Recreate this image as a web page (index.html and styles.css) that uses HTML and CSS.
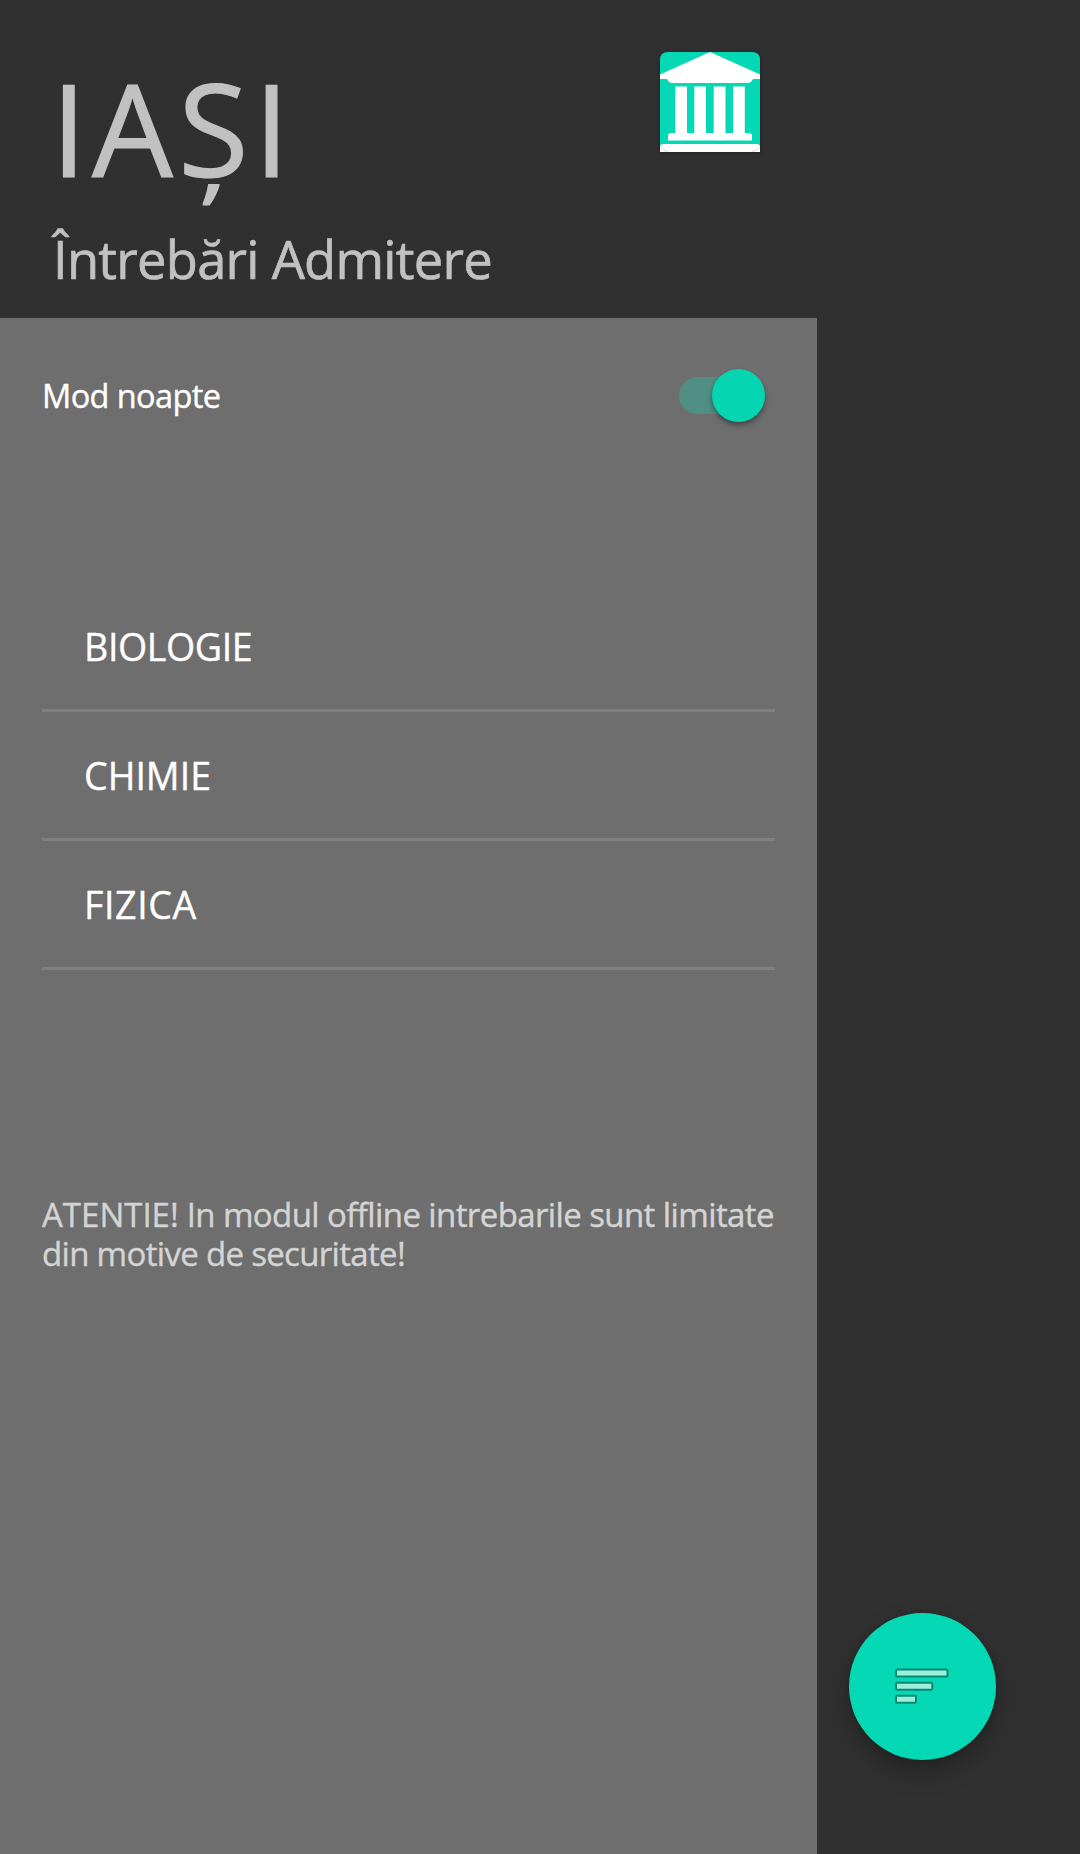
FILE: index.html
```html
<!DOCTYPE html>
<html lang="ro">
<head>
<meta charset="utf-8">
<title>Întrebări Admitere</title>
<link rel="stylesheet" href="styles.css">
</head>
<body>
<div class="app">
  <aside class="drawer">
    <header class="header">
      <div class="heading">
        <h1 class="title">IAȘI</h1>
        <p class="subtitle">Întrebări Admitere</p>
      </div>
      <svg class="logo" viewBox="0 0 100 100">
        <path fill="#05d8b4" d="M8 0H92Q100 0 100 8V100H0V8Q0 0 8 0Z"/>
        <path fill="#fff" d="M50 0L100 22.5V27H93Q91 31 88 31H12Q9 31 7 27H0V22.5Z"/>
        <path fill="#fff" d="M15.3 34.5H27V81H34.300V34.500H46V81H53.700V34.500H65.500V81H73V34.500H84.800V81H89Q92 81 92 84V88.500H8V84Q8 81 11 81H15.300Z"/>
        <path fill="#fff" d="M2 92H98L100 94V100H0V94Z"/>
        <path fill="none" stroke="#ccc" stroke-width=".8" d="M.5 95Q3 99 8 99.600M99.500 95Q97 99 92 99.600"/>
      </svg>
    </header>
    <main class="panel">
      <label class="setting">
        <span class="setting-label">Mod noapte</span>
        <span class="switch"><span class="thumb"></span></span>
      </label>
      <ul class="menu">
        <li class="item biology">BIOLOGIE</li>
        <li class="item chemistry">CHIMIE</li>
        <li class="item physics">FIZICA</li>
      </ul>
      <p class="notice">ATENTIE!<span class="notice-first"> In modul offline intrebarile sunt limitate</span><br><span class="notice-second">din motive de securitate!</span></p>
    </main>
  </aside>
  <div class="backdrop">
    <button class="fab" aria-label="Meniu">
      <svg width="55" height="37" viewBox="0 0 55 37" fill="#9befdf" stroke="#0b8871" stroke-width="2">
        <rect x="1" y="1.500" width="51.500" height="7" rx="1"/>
        <rect x="1" y="14.700" width="36.300" height="7" rx="1"/>
        <rect x="1" y="27.700" width="20" height="7" rx="1"/>
      </svg>
    </button>
  </div>
</div>
</body>
</html>
```
FILE: styles.css
```css
* { box-sizing: border-box; }
body {
  margin: 0;
  background: #303030;
  color: #fff;
  font-family: "Open Sans", "Noto Sans", sans-serif;
  -webkit-text-stroke: .4px currentColor;
}
.app { display: flex; height: 1854px; }
.drawer { width: 817px; display: flex; flex-direction: column; }
.header {
  height: 318px;
  padding: 53px 57px 0 53px;
  display: flex;
  justify-content: space-between;
  align-items: flex-start;
  color: #c1c1c1;
}
.title, .subtitle { margin: 0; font-weight: 400; white-space: nowrap; }
.title {
  font-size: 128px;
  line-height: 150px;
  letter-spacing: 5.3px;
  margin-left: -2px;
  -webkit-text-stroke-width: 1.2px;
}
.subtitle { font-size: 52.5px; line-height: 70px; margin-top: 21px; letter-spacing: -.75px; -webkit-text-stroke-width: .7px; }
.logo { width: 100px; height: 100px; margin-top: -1px; filter: drop-shadow(0 1px 2px rgba(0, 0, 0, .3)); }
.panel { flex: 1; background: #6e6e6e; padding: 55px 42px 0; }
.setting {
  height: 44px;
  padding-right: 10px;
  display: flex;
  align-items: center;
  justify-content: space-between;
}
.setting-label { font-size: 32.5px; line-height: 44px; padding-top: 2px; letter-spacing: -.6px; }
.switch {
  width: 86px;
  height: 37px;
  border-radius: 19px;
  background: #508f83;
  display: flex;
  align-items: center;
  justify-content: flex-end;
}
.thumb {
  width: 53px;
  height: 53px;
  flex: none;
  border-radius: 50%;
  background: #05d5b1;
  box-shadow: 0 3px 5px rgba(0, 0, 0, .4);
}
.menu { list-style: none; margin: 166px 0 0; padding: 0; }
.item {
  height: 129px;
  padding-left: 42px;
  border-bottom: 3px solid #808080;
  font-size: 37.6px;
  line-height: 127px;
}
.biology { letter-spacing: -.4px; }
.chemistry { letter-spacing: 0; }
.physics { letter-spacing: .6px; }
.notice {
  margin: 225px 0 0;
  color: #d4d4d4;
  font-size: 33px;
  line-height: 39px;
  white-space: nowrap;
}
.notice-first { letter-spacing: -.6px; }
.notice-second { letter-spacing: -.68px; }
.backdrop {
  flex: 1;
  display: flex;
  flex-direction: column;
  justify-content: flex-end;
  align-items: flex-end;
  padding: 0 84px 94px 0;
}
.fab {
  width: 147px;
  height: 147px;
  padding: 0;
  border: 0;
  border-radius: 50%;
  background: #05d8b4;
  display: flex;
  align-items: center;
  justify-content: center;
  box-shadow: 0 12px 26px rgba(0, 0, 0, .24), 0 2px 6px rgba(0, 0, 0, .16);
}
```
